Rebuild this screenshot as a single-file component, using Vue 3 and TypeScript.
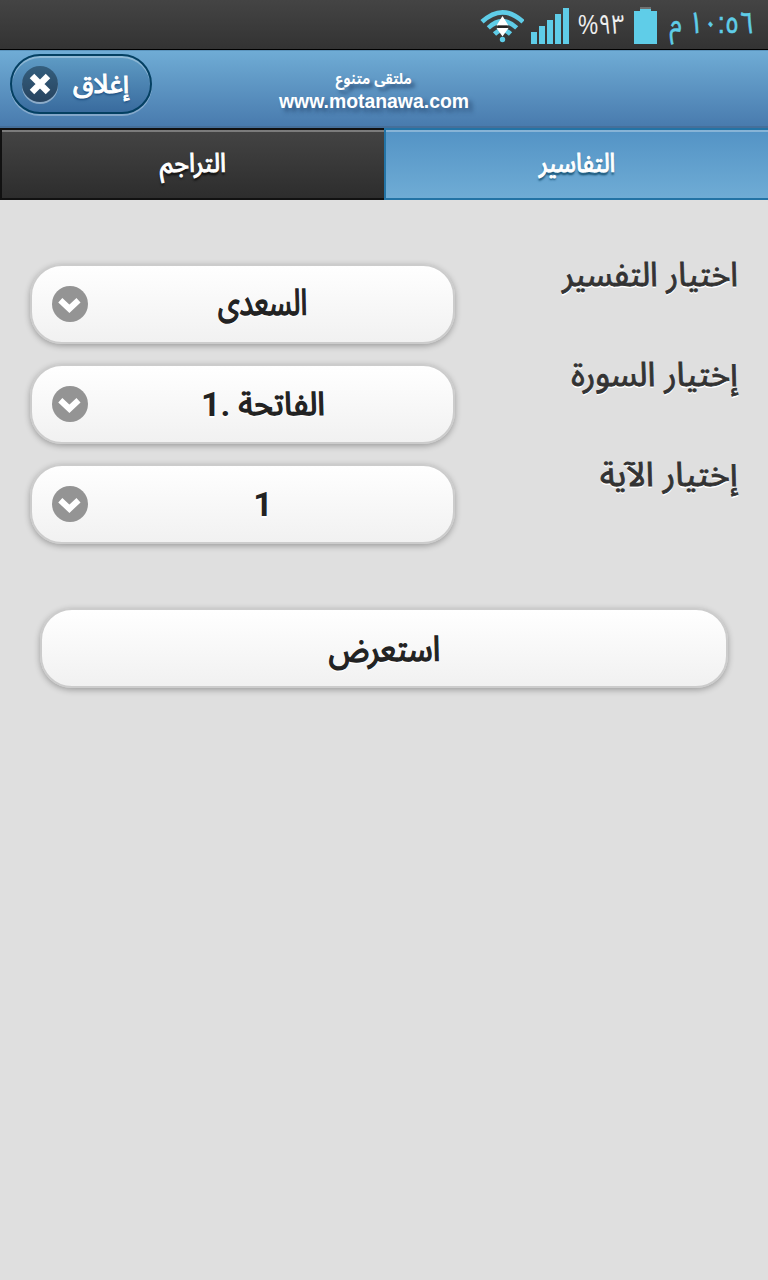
<script setup lang="ts">
import { ref } from 'vue'

interface Field {
  id: string
  label: string
  number: string
  name: string
}

const activeTab = ref('tafsir')
const tabs = [
  { id: 'tafsir', title: 'التفاسير' },
  { id: 'tarajim', title: 'التراجم' },
]
const fields: Field[] = [
  { id: 'tafsir', label: 'اختيار التفسير', number: '', name: 'السعدى' },
  { id: 'sura', label: 'إختيار السورة', number: '1.', name: 'الفاتحة' },
  { id: 'aya', label: 'إختيار الآية', number: '1', name: '' },
]
</script>

<template>
  <div class="screen">
    <div class="status">
      <svg class="wifi" width="44" height="34" viewBox="0 0 44 34">
        <g fill="none" stroke="#5fcde8" stroke-width="4.6">
          <path d="M2 12.8Q22.500 -6.2 43 12.8" />
          <path d="M8.300 18.900Q22.500 5.600 36.700 18.900" />
          <path d="M14.500 25Q22.500 17 30.500 25" />
        </g>
        <circle cx="22.500" cy="30.500" r="2.7" fill="#5fcde8" />
        <path d="M22.500 7L28.500 16.500H16.500ZM16.500 19H28.500L22.500 27.500Z" fill="#fff" />
        <path d="M18 17.700H27.500" stroke="#222" stroke-width="2.200" />
      </svg>
      <svg class="signal" width="38" height="36" viewBox="0 0 38 36">
        <path d="M0 24h6v12H0zM8 18h6v18H8zM16 12h6v24h-6zM24 6h6v30h-6zM32 0h6v36h-6z" fill="#5fcde8" />
      </svg>
      <span class="percent" dir="ltr"><span>%٩٣</span></span>
      <svg class="battery" width="23" height="37" viewBox="0 0 23 37">
        <path d="M6 0h11v3H6z" fill="#717171" />
        <path d="M6 2h11v2h6v33H0V4h6z" fill="#5fcde8" />
      </svg>
      <span class="clock" dir="rtl"><span>١٠:٥٦ م</span></span>
    </div>

    <header class="header">
      <button class="close">
        <svg class="close-icon" width="36" height="38" viewBox="0 0 36 38">
          <defs>
            <linearGradient id="disc" x1="0" y1="0" x2="0" y2="1">
              <stop offset="0" stop-color="#345e7d" />
              <stop offset="1" stop-color="#27435f" />
            </linearGradient>
          </defs>
          <circle cx="18" cy="20" r="18" fill="#fff" fill-opacity=".4" />
          <circle cx="18" cy="18" r="18" fill="url(#disc)" />
          <path d="M10 10L26 26M26 10L10 26" stroke="#fff" stroke-width="6.400" />
        </svg>
        <span class="close-text">إغلاق</span>
      </button>
      <div class="brand">
        <span class="brand-name">ملتقى متنوع</span>
        <span class="brand-url">www.motanawa.com</span>
      </div>
    </header>

    <nav class="tabs" dir="rtl">
      <button
        v-for="tab in tabs"
        :key="tab.id"
        class="tab"
        :class="{ active: tab.id === activeTab }"
        @click="activeTab = tab.id"
      >
        <span>{{ tab.title }}</span>
      </button>
    </nav>

    <main class="content">
      <div v-for="field in fields" :key="field.id" class="row">
        <button class="pill select">
          <svg class="chevron" width="36" height="36" viewBox="0 0 36 36">
            <circle cx="18" cy="18" r="18" fill="#949494" />
            <path d="M8.300 14.300L17.400 22.800L26.500 14.300" fill="none" stroke="#fff" stroke-width="6" />
          </svg>
          <span class="value" dir="ltr">
            <span v-if="field.number" class="number">{{ field.number }}</span>
            <span v-if="field.name" class="name" :class="'name-' + field.id">{{ field.name }}</span>
          </span>
        </button>
        <label class="label" :class="'label-' + field.id" dir="rtl">{{ field.label }}</label>
      </div>
      <button class="pill submit"><span class="name name-submit">استعرض</span></button>
    </main>
  </div>
</template>

<style>
body {
  background: #dfdfdf;
}
</style>

<style scoped>
.screen {
  width: 768px;
  height: 1280px;
  overflow: hidden;
  background: #dfdfdf;
  font-family: "Liberation Sans", "Noto Sans Arabic", "DejaVu Sans", sans-serif;
}
.screen * {
  box-sizing: border-box;
}
button {
  font: inherit;
  padding: 0;
  margin: 0;
}
span,
label {
  white-space: nowrap;
}
.status {
  height: 50px;
  border-bottom: 1px solid #000;
  background: linear-gradient(#444, #333);
  display: flex;
  align-items: flex-start;
  padding-left: 480px;
}
.wifi {
  margin-top: 9px;
}
.signal {
  margin: 8px 0 0 7px;
}
.percent {
  width: 48px;
  margin-left: 9px;
  line-height: 50px;
  font-size: 27px;
  color: #eee;
}
.percent span {
  display: inline-block;
  transform: scaleX(0.84);
  transform-origin: left center;
}
.battery {
  margin: 7px 0 0 8px;
}
.clock {
  width: 86px;
  margin-left: 11px;
  line-height: 45px;
  font-size: 30px;
  color: #5fcde8;
  -webkit-text-stroke: 0.6px #5fcde8;
}
.clock span {
  display: inline-block;
  transform: scaleX(0.845);
  transform-origin: right center;
}
.header {
  height: 78px;
  display: flex;
  align-items: flex-start;
  background: linear-gradient(#6facd5, #497bae);
  border-top: 1px solid #5b94bd;
  border-bottom: 2px solid #456f9a;
  color: #fff;
}
.close {
  width: 142px;
  height: 60px;
  margin: 3px 0 0 10px;
  border: 2px solid #044062;
  border-radius: 30px;
  background: linear-gradient(#5f9cc5, #396b9e);
  box-shadow: inset 0 2px 0 rgba(255, 255, 255, 0.3), 0 2px 0 rgba(255, 255, 255, 0.3);
  display: flex;
  align-items: center;
  padding-left: 10px;
  color: #fff;
}
.close-icon {
  margin-top: 2px;
  flex: none;
}
.close-text {
  margin: 2px 0 0 15px;
  font-size: 25px;
  -webkit-text-stroke: 1px #fff;
  text-shadow: 0 2px 2px #194b7e;
  transform: scale(1.06, 1.05);
  transform-origin: left center;
}
.brand {
  width: 192px;
  margin: 18px 0 0 126px;
  display: flex;
  flex-direction: column;
  align-items: center;
  font-weight: bold;
  text-shadow: 4px 4px 4px rgba(30, 60, 100, 0.6);
}
.brand-name {
  font-size: 15px;
  line-height: 20px;
  transform: scaleX(0.94);
}
.brand-url {
  font-size: 19.4px;
  line-height: 24px;
}
.tabs {
  display: grid;
  grid-template-columns: 1fr 1fr;
  height: 72px;
}
.tab {
  border: 2px solid #111;
  border-right-width: 0;
  background: linear-gradient(#444, #2d2d2d);
  box-shadow: inset 0 2px 0 rgba(255, 255, 255, 0.3);
  color: #fff;
  font-size: 25px;
  -webkit-text-stroke: 1px #fff;
  text-shadow: 0 2px 2px #111;
}
.tab span {
  display: inline-block;
  transform: scaleY(1.05);
}
.tab.active {
  border-color: #2373a5;
  background: linear-gradient(#5393c5, #6facd5);
  text-shadow: 0 2px 2px #145072;
}
.tab.active span {
  transform: scale(0.95, 1.05);
}
.content {
  padding: 64px 30px 0;
}
.row {
  display: flex;
  justify-content: space-between;
  align-items: flex-start;
  height: 100px;
}
.pill {
  display: flex;
  align-items: center;
  height: 80px;
  border: 2px solid #ccc;
  border-radius: 32px;
  background: linear-gradient(#fff, #f1f1f1);
  box-shadow: 0 2px 6px rgba(0, 0, 0, 0.3);
  color: #222;
  font-size: 32px;
  text-shadow: 0 2px 0 #fff;
}
.select {
  width: 425px;
  padding: 0 0 0 20px;
}
.value {
  flex: 1;
  display: flex;
  justify-content: center;
  gap: 8px;
  height: 40px;
  line-height: 40px;
  overflow: hidden;
  padding-right: 15px;
}
.number {
  font-family: Roboto, sans-serif;
  font-size: 34px;
  font-weight: bold;
}
.name {
  -webkit-text-stroke: 1.3px #222;
}
.name-tafsir {
  transform: scale(0.88, 1.12);
  transform-origin: center 78%;
}
.name-submit {
  transform: translateY(2px) scale(0.97, 1.08);
}
.submit {
  width: 688px;
  margin: 44px 0 0 10px;
  justify-content: center;
}
.label {
  font-size: 32px;
  line-height: 40px;
  margin-top: -9px;
  color: #333;
  -webkit-text-stroke: 0.9px #333;
  text-shadow: 0 2px 0 #fff;
  transform: scaleY(1.05);
  transform-origin: right 85%;
}
.label-sura {
  transform: scale(1.03, 1.05);
}
.label-aya {
  transform: scale(1.045, 1.05);
}
</style>
